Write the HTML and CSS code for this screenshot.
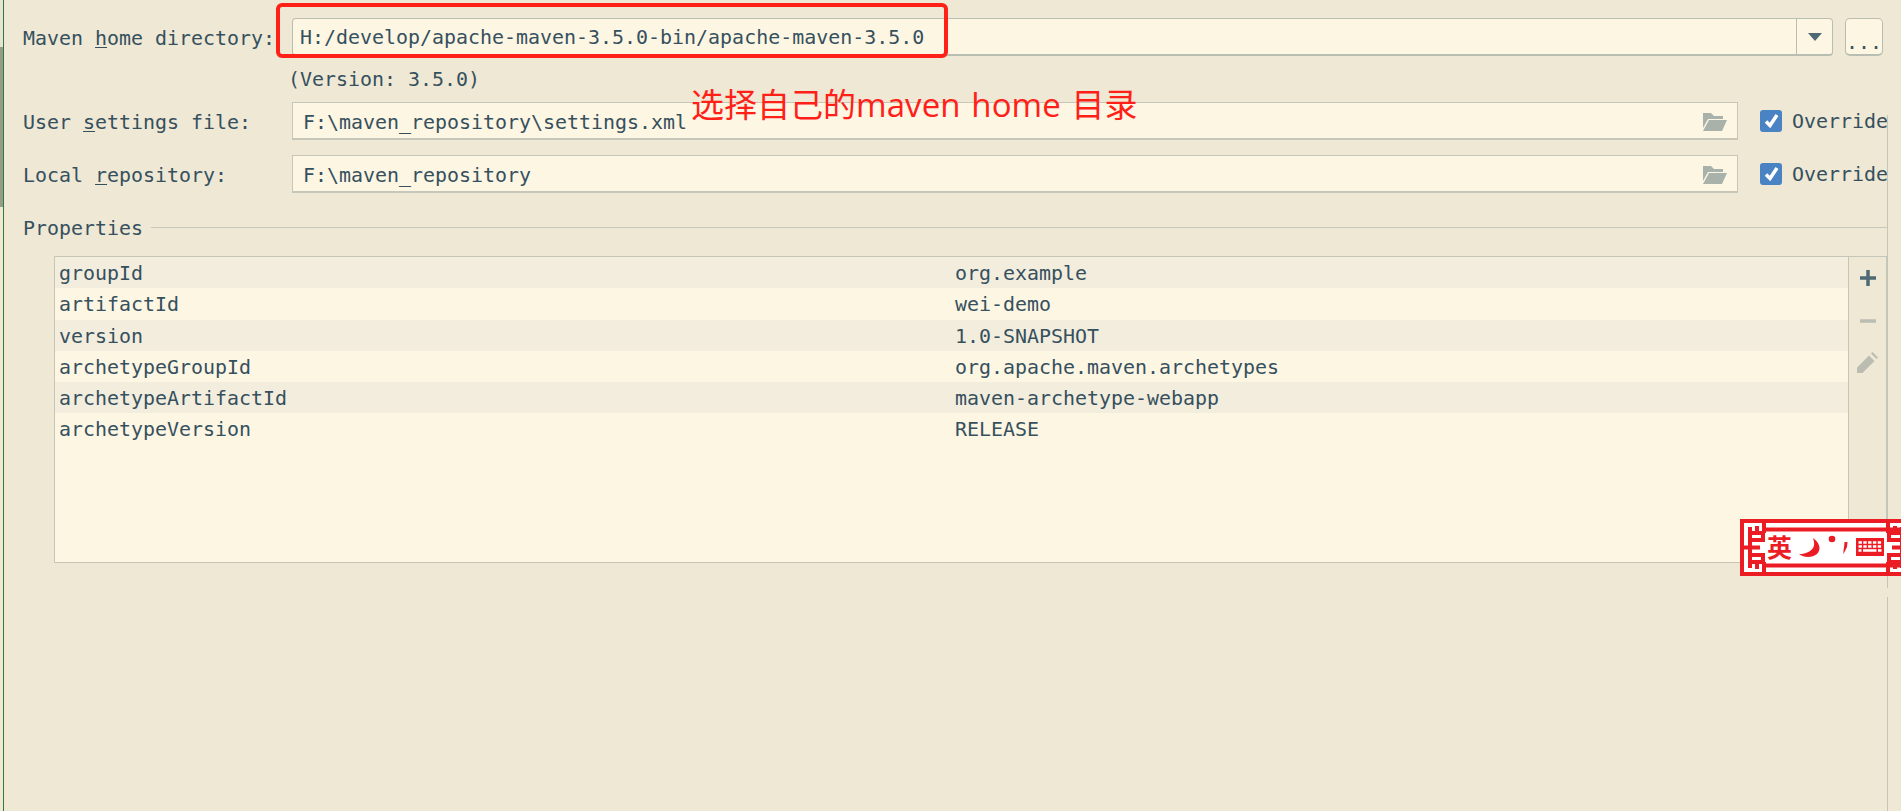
FILE: index.html
```html
<!DOCTYPE html>
<html lang="en">
<head>
<meta charset="utf-8">
<title>Maven settings</title>
<link rel="stylesheet" href="styles.css">
</head>
<body>
<div class="page">
  <div class="rail"><div class="rail-top"></div><div class="rail-mid"></div></div>
  <div class="accent"></div>
  <main class="content">
    <div class="row row-home">
      <label class="label">Maven <u>h</u>ome directory:</label>
      <div class="combo">
        <div class="combo-text">H:/develop/apache-maven-3.5.0-bin/apache-maven-3.5.0</div>
        <div class="combo-arrow"><span class="tri"></span></div>
      </div>
      <button class="more">...</button>
    </div>
    <div class="version">(Version: 3.5.0)</div>
    <div class="row row-file">
      <label class="label">User <u>s</u>ettings file:</label>
      <div class="field">
        <span class="field-text">F:\maven_repository\settings.xml</span>
        <svg class="folder" viewBox="0 0 24 18"><path d="M0 0h8l3 3h9v3H5L0 15z"/><path d="M6 7h18l-5 11H0z"/></svg>
      </div>
      <span class="check"><svg viewBox="0 0 22 22"><path d="M6 11.500l4 4L17 5"/></svg></span>
      <span class="override">Override</span>
    </div>
    <div class="row row-file row-local">
      <label class="label">Local <u>r</u>epository:</label>
      <div class="field">
        <span class="field-text">F:\maven_repository</span>
        <svg class="folder" viewBox="0 0 24 18"><path d="M0 0h8l3 3h9v3H5L0 15z"/><path d="M6 7h18l-5 11H0z"/></svg>
      </div>
      <span class="check"><svg viewBox="0 0 22 22"><path d="M6 11.500l4 4L17 5"/></svg></span>
      <span class="override">Override</span>
    </div>
    <div class="section"><span>Properties</span><i class="section-line"></i></div>
    <div class="table">
      <div class="props">
        <div class="prop alt"><span>groupId</span><span>org.example</span></div>
        <div class="prop"><span>artifactId</span><span>wei-demo</span></div>
        <div class="prop alt"><span>version</span><span>1.0-SNAPSHOT</span></div>
        <div class="prop"><span>archetypeGroupId</span><span>org.apache.maven.archetypes</span></div>
        <div class="prop alt"><span>archetypeArtifactId</span><span>maven-archetype-webapp</span></div>
        <div class="prop"><span>archetypeVersion</span><span>RELEASE</span></div>
      </div>
      <div class="tools">
        <svg class="tool plus" viewBox="0 0 16 16"><path d="M8 0v16M0 8h16"/></svg>
        <svg class="tool minus" viewBox="0 0 16 16"><path d="M0 8h16"/></svg>
        <svg class="tool pencil" viewBox="0 0 21 21"><path d="M0 15.500L12 3.500l5.500 5.500L5.500 21H0z"/><path d="M14 1.500L15.500 0 21 5.500 19.500 7z"/></svg>
      </div>
    </div>
  </main>
</div>

<div class="vline"></div>
<div class="callout"></div>
<div class="note">选择自己的<span class="note-latin">maven home </span>目录</div>

<div class="ime">
  <svg viewBox="0 0 161 57" width="161" height="57">
    <rect width="161" height="57" fill="#fff"/>
    <g class="knot">
      <path d="M0 2H161M24 10.500H161M24 46.500H161M0 55H161"/>
      <g id="lattice">
        <path d="M2 0V57M24 0V14M24 43V57"/>
        <path d="M10 8V21H23V14H9M0 28.500H20M10 49V36H23V43H9"/>
        <path d="M17 7V14M17 43V50M10 21V36"/>
      </g>
      <use href="#lattice" transform="translate(172 0) scale(-1 1)"/>
    </g>
    <text class="ime-char" x="27" y="38">英</text>
    <path class="ime-red" d="M73 19c6 4 9 11 4 16-5 4-13 4-18 0 6 0 11-2 14-6 2-3 1-7 0-10z"/>
    <circle class="ime-red" cx="92" cy="20" r="3.300"/>
    <path class="ime-red" d="M104.500 23h3l-.5 5-3.500 7c-.5-3 1-8 1-12z"/>
    <rect class="ime-red" x="116" y="19" width="28" height="18"/>
    <path class="ime-keys" d="M118.500 23.500h23M118.500 27.500h23"/>
    <path class="ime-bar" d="M118.500 31.500h3M123 31.500h13.500M138 31.500h3.500"/>
  </svg>
</div>
</body>
</html>
```

FILE: styles.css
```css
* { box-sizing: border-box; }

html, body {
  margin: 0;
  height: 100%;
  background: #eee8d5;
  overflow: hidden;
}

body {
  font-family: "DejaVu Sans Mono", "Liberation Mono", monospace;
  font-size: 19.95px;
  color: #36505e;
}

.page {
  display: flex;
  height: 811px;
}

.rail { width: 3px; flex: none; }
.rail-top { height: 47px; background: #e8e3d2; }
.rail-mid { height: 160px; background: #959b8d; }

.accent { width: 1px; flex: none; background: #2e7d32; }

.content {
  flex: 1;
  min-width: 0;
  padding: 18px 13px 0 19px;
}

.row {
  display: flex;
  align-items: center;
  height: 38px;
}

.row-home { margin-right: 5px; }
.row-file { margin-right: 1px; }
.row-local { margin-top: 15px; }

.label {
  width: 269px;
  flex: none;
  padding-top: 2px;
  white-space: nowrap;
}

.label u { text-underline-offset: 2px; }

.combo {
  flex: 1;
  height: 38px;
  display: flex;
  background: #fdf6e3;
  border: 1px solid #b9beb2;
  border-bottom-width: 2px;
  border-radius: 4px;
}

.combo-text {
  flex: 1;
  padding: 0 7px;
  line-height: 37px;
  white-space: nowrap;
}

.combo-arrow {
  width: 36px;
  flex: none;
  display: flex;
  align-items: center;
  justify-content: center;
  border-left: 1px solid #b9beb2;
}

.tri {
  width: 0;
  height: 0;
  border-left: 7px solid transparent;
  border-right: 7px solid transparent;
  border-top: 8px solid #4f6a75;
}

.more {
  width: 38px;
  height: 38px;
  flex: none;
  margin-left: 12px;
  padding: 11px 0 0;
  font: inherit;
  color: inherit;
  background: #fdf6e3;
  border: 1px solid #b9beb2;
  border-bottom-width: 2px;
  border-radius: 5px;
}

.version {
  height: 46px;
  margin-left: 265px;
  line-height: 46px;
}

.field {
  width: 1446px;
  height: 38px;
  flex: none;
  display: flex;
  align-items: center;
  justify-content: space-between;
  padding: 0 10px;
  background: #fdf6e3;
  border: 1px solid #c6c7b9;
  border-bottom-width: 2px;
}

.field-text { padding-top: 2px; }

.folder {
  width: 24px;
  height: 18px;
  fill: #a9b2aa;
  margin-top: 2px;
}

.check {
  width: 22px;
  height: 22px;
  flex: none;
  margin-left: 22px;
  background: #4a83c3;
  border-radius: 3px;
}

.check svg {
  display: block;
  fill: none;
  stroke: #fff;
  stroke-width: 3.500;
}

.override {
  width: 95px;
  flex: none;
  margin-left: 10px;
  overflow: hidden;
  white-space: nowrap;
}

.section {
  display: flex;
  align-items: center;
  gap: 8px;
  height: 26px;
  margin-top: 22px;
  margin-right: 1px;
}

.section-line {
  flex: 1;
  height: 1px;
  margin-top: -1px;
  background: #c8c8bb;
}

.table {
  display: flex;
  height: 307px;
  margin: 15px 0 0 31px;
  border: 1px solid #c5c6b8;
  border-right-width: 2px;
  background: #fdf6e3;
}

.props { flex: 1; min-width: 0; }

.prop {
  display: grid;
  grid-template-columns: 896px 1fr;
  height: 31.25px;
  padding-left: 4px;
  line-height: 33px;
}

.alt { background: #f3eddd; }

.tools {
  width: 38px;
  flex: none;
  display: flex;
  flex-direction: column;
  align-items: center;
  background: #eee8d5;
  border-left: 1px solid #c5c6b8;
  padding-top: 13px;
}

.tool { display: block; width: 16px; height: 16px; flex: none; }
.tool path { fill: none; stroke-width: 3.500; }
.plus { stroke: #4f6a75; }
.minus { stroke: #bcbdb2; margin-top: 27px; }
.pencil { width: 21px; height: 21px; margin-top: 23px; }
.tool.pencil path { fill: #bcbdb2; stroke: none; }

.vline {
  position: absolute;
  left: 1887px;
  top: 115px;
  width: 1px;
  height: 696px;
  background: linear-gradient(#c5c6b8 0 473px, transparent 473px 482px, #c5c6b8 482px);
}

.callout {
  position: absolute;
  left: 276px;
  top: 3px;
  width: 672px;
  height: 55px;
  border: 4px solid #ff2018;
  border-radius: 6px;
}

.note {
  position: absolute;
  left: 691px;
  top: 82px;
  font-family: "Open Sans", "Noto Sans CJK SC", sans-serif;
  font-size: 33px;
  line-height: 46px;
  color: #ff2018;
  white-space: nowrap;
}

.note-latin {
  letter-spacing: 0.1px;
  word-spacing: 2px;
}

.ime {
  position: absolute;
  left: 1740px;
  top: 519px;
  width: 161px;
  height: 57px;
}

.ime svg { display: block; }

.knot path {
  fill: none;
  stroke: #ec1c24;
  stroke-width: 4;
}

.ime-char {
  font-family: "Noto Sans CJK SC", sans-serif;
  font-size: 25px;
  font-weight: 700;
  fill: #ec1c24;
}

.ime-red { fill: #ec1c24; }

.ime-keys {
  fill: none;
  stroke: #fff;
  stroke-width: 2.600;
  stroke-dasharray: 3.400 1.400;
}

.ime-bar {
  fill: none;
  stroke: #fff;
  stroke-width: 2.600;
}
```
